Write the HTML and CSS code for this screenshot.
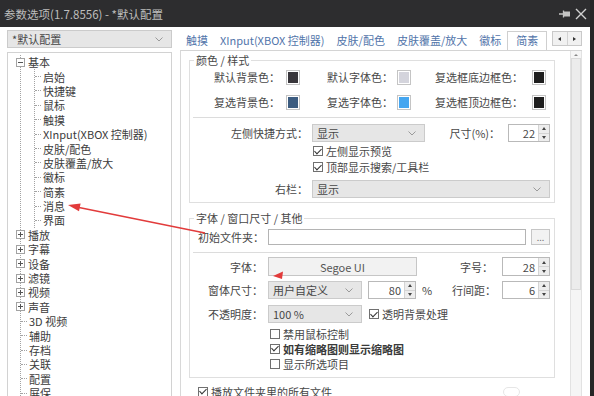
FILE: index.html
```html
<!DOCTYPE html>
<html lang="zh-CN">
<head>
    <meta charset="UTF-8">
    <meta name="viewport" content="width=device-width, initial-scale=1.0">
    <title>参数选项</title>
    <link rel="stylesheet" href="styles.css">
</head>
<body>
<div class="window">
    <div class="titlebar">
        <span class="title">参数选项(1.7.8556) - *默认配置</span>
        <div class="title-btns">
            <svg width="12" height="10" viewBox="0 0 12 10"><path d="M0 5h4M4.5 1.5v7" stroke="#c4c4c4" stroke-width="1.3"/><rect x="5" y="2.5" width="6" height="5" fill="#c4c4c4"/></svg>
            <svg width="12" height="12" viewBox="0 0 12 12"><path d="M1 1l10 10M11 1L1 11" stroke="#d2d2d2" stroke-width="1.4"/></svg>
        </div>
    </div>

    <div class="main">
        <div class="sidebar">
            <div class="select">*默认配置
                <svg width="8" height="5" viewBox="0 0 8 5"><path d="M0.5 0.5L4 4L7.5 0.5" fill="none" stroke="#9a9a9a"/></svg>
            </div>
            <div class="tree">
                <ul class="roots">
                    <li>
                        <div class="row"><svg class="tbox" viewBox="0 0 9 9"><rect x=".5" y=".5" width="8" height="8" fill="#fff" stroke="#a3a3a3"/><path d="M2 4.5h5" stroke="#555"/></svg><span>基本</span></div>
                        <ul class="children">
                            <li class="row leaf">启始</li>
                            <li class="row leaf">快捷键</li>
                            <li class="row leaf">鼠标</li>
                            <li class="row leaf">触摸</li>
                            <li class="row leaf">XInput(XBOX 控制器)</li>
                            <li class="row leaf">皮肤/配色</li>
                            <li class="row leaf">皮肤覆盖/放大</li>
                            <li class="row leaf">徽标</li>
                            <li class="row leaf">简素</li>
                            <li class="row leaf">消息</li>
                            <li class="row leaf">界面</li>
                        </ul>
                    </li>
                    <li class="row"><svg class="tbox" viewBox="0 0 9 9"><rect x=".5" y=".5" width="8" height="8" fill="#fff" stroke="#a3a3a3"/><path d="M2 4.5h5M4.5 2v5" stroke="#555"/></svg><span>播放</span></li>
                    <li class="row"><svg class="tbox" viewBox="0 0 9 9"><rect x=".5" y=".5" width="8" height="8" fill="#fff" stroke="#a3a3a3"/><path d="M2 4.5h5M4.5 2v5" stroke="#555"/></svg><span>字幕</span></li>
                    <li class="row"><svg class="tbox" viewBox="0 0 9 9"><rect x=".5" y=".5" width="8" height="8" fill="#fff" stroke="#a3a3a3"/><path d="M2 4.5h5M4.5 2v5" stroke="#555"/></svg><span>设备</span></li>
                    <li class="row"><svg class="tbox" viewBox="0 0 9 9"><rect x=".5" y=".5" width="8" height="8" fill="#fff" stroke="#a3a3a3"/><path d="M2 4.5h5M4.5 2v5" stroke="#555"/></svg><span>滤镜</span></li>
                    <li class="row"><svg class="tbox" viewBox="0 0 9 9"><rect x=".5" y=".5" width="8" height="8" fill="#fff" stroke="#a3a3a3"/><path d="M2 4.5h5M4.5 2v5" stroke="#555"/></svg><span>视频</span></li>
                    <li class="row"><svg class="tbox" viewBox="0 0 9 9"><rect x=".5" y=".5" width="8" height="8" fill="#fff" stroke="#a3a3a3"/><path d="M2 4.5h5M4.5 2v5" stroke="#555"/></svg><span>声音</span></li>
                    <li class="row leaf">3D 视频</li>
                    <li class="row leaf">辅助</li>
                    <li class="row leaf">存档</li>
                    <li class="row leaf">关联</li>
                    <li class="row leaf">配置</li>
                    <li class="row leaf">屏保</li>
                </ul>
            </div>
        </div>

        <div class="settings">
            <div class="tabbar">
                <div class="tabs">
                    <span class="tab">触摸</span>
                    <span class="tab">XInput(XBOX 控制器)</span>
                    <span class="tab">皮肤/配色</span>
                    <span class="tab">皮肤覆盖/放大</span>
                    <span class="tab">徽标</span>
                    <span class="tab active">简素</span>
                    <span class="tab">消息</span>
                </div>
                <div class="tab-scroll"><span class="left"></span><span class="right"></span></div>
            </div>

            <div class="panel">
                <div class="content">
                    <fieldset class="group">
                        <legend>颜色 / 样式</legend>
                        <div class="colors">
                            <span class="clabel">默认背景色：</span><span class="swatch c-bg"></span>
                            <span class="clabel">默认字体色：</span><span class="swatch c-fg"></span>
                            <span class="clabel">复选框底边框色：</span><span class="swatch c-dark"></span>
                            <span class="clabel">复选背景色：</span><span class="swatch c-selbg"></span>
                            <span class="clabel">复选字体色：</span><span class="swatch c-selfg"></span>
                            <span class="clabel">复选框顶边框色：</span><span class="swatch c-dark"></span>
                        </div>
                        <div class="sep"></div>
                        <div class="frow">
                            <span class="flabel wide">左侧快捷方式：</span>
                            <div class="select w113">显示<svg width="8" height="5" viewBox="0 0 8 5"><path d="M0.5 0.5L4 4L7.5 0.5" fill="none" stroke="#9a9a9a"/></svg></div>
                            <div class="right-pair">
                                <span>尺寸(%)：</span>
                                <div class="spin w42"><span class="val">22</span><span class="arrows"><i class="up"></i><i class="dn"></i></span></div>
                            </div>
                        </div>
                        <div class="cbrow indent-wide first"><span class="cb checked"></span>左侧显示预览</div>
                        <div class="cbrow indent-wide"><span class="cb checked"></span>顶部显示搜索/工具栏</div>
                        <div class="frow gap5">
                            <span class="flabel wide">右栏：</span>
                            <div class="select grow">显示<svg width="8" height="5" viewBox="0 0 8 5"><path d="M0.5 0.5L4 4L7.5 0.5" fill="none" stroke="#9a9a9a"/></svg></div>
                        </div>
                    </fieldset>

                    <fieldset class="group second">
                        <legend>字体 / 窗口尺寸 / 其他</legend>
                        <div class="frow h16 first">
                            <span class="flabel">初始文件夹：</span>
                            <div class="input grow"></div>
                            <div class="btn dots">...</div>
                        </div>
                        <div class="sep sep2"></div>
                        <div class="frow h19">
                            <span class="flabel">字体：</span>
                            <div class="btn font">Segoe UI</div>
                            <div class="right-pair">
                                <span class="rlabel">字号：</span>
                                <div class="spin w48"><span class="val">28</span><span class="arrows"><i class="up"></i><i class="dn"></i></span></div>
                            </div>
                        </div>
                        <div class="frow gap5">
                            <span class="flabel">窗体尺寸：</span>
                            <div class="select w94">用户自定义<svg width="8" height="5" viewBox="0 0 8 5"><path d="M0.5 0.5L4 4L7.5 0.5" fill="none" stroke="#9a9a9a"/></svg></div>
                            <div class="spin w48 ml6"><span class="val">80</span><span class="arrows"><i class="up"></i><i class="dn"></i></span></div>
                            <span class="pct">%</span>
                            <div class="right-pair">
                                <span class="rlabel">行间距：</span>
                                <div class="spin w48"><span class="val">6</span><span class="arrows"><i class="up"></i><i class="dn"></i></span></div>
                            </div>
                        </div>
                        <div class="frow gap6">
                            <span class="flabel">不透明度：</span>
                            <div class="select w94">100 %<svg width="8" height="5" viewBox="0 0 8 5"><path d="M0.5 0.5L4 4L7.5 0.5" fill="none" stroke="#9a9a9a"/></svg></div>
                            <span class="cb checked ml7"></span><span class="cbtext">透明背景处理</span>
                        </div>
                        <div class="cbrow indent first2"><span class="cb"></span>禁用鼠标控制</div>
                        <div class="cbrow indent bold"><span class="cb checked"></span>如有缩略图则显示缩略图</div>
                        <div class="cbrow indent"><span class="cb"></span>显示所选项目</div>
                    </fieldset>

                    <div class="cbrow last"><span class="cb checked"></span>播放文件夹里的所有文件<span class="toggle"></span></div>
                </div>
                <div class="scrollbar">
                    <span class="sb-up"></span>
                    <div class="sb-thumb"></div>
                </div>
            </div>
        </div>
    </div>

    <svg class="annot" width="594" height="396" viewBox="0 0 594 396">
        <path d="M79 207.5L205 233" stroke="#e23b3b" stroke-width="1.5"/>
        <polygon points="68,205 80.6,203.4 79,211.3" fill="#e23b3b"/>
        <polygon points="273,276 283,271.5 282,279" fill="#e23b3b"/>
    </svg>
</div>
</body>
</html>
```

FILE: styles.css
```css
* { box-sizing: border-box; }
body { margin: 0; background: #fff; font-family: "Noto Sans CJK SC", "Liberation Sans", sans-serif; font-size: 11px; color: #474747; }

.window { width: 594px; height: 396px; display: flex; flex-direction: column; border-right: 4px solid #262626; overflow: hidden; position: relative; background: #fff; }
.titlebar { height: 27px; flex: none; background: #2d2d2f; display: flex; align-items: center; justify-content: space-between; padding: 0 3px 0 4px; }
.title { color: #bdbdbd; font-size: 11.5px; }
.title-btns { display: flex; align-items: center; gap: 4px; }

.main { flex: 1; display: flex; padding: 3px 0 0 7px; min-height: 0; }
.sidebar { width: 165px; flex: none; display: flex; flex-direction: column; }

.select { height: 18px; border: 1px solid #cbcbcb; background: #e6e6e6; display: flex; align-items: center; justify-content: space-between; padding: 0 8px 0 4px; line-height: 16px; white-space: nowrap; }
.select.w113 { width: 113px; }
.select.w94 { width: 94px; }
.select.grow { flex: 1; }

/* tree */
.tree { flex: 1; margin-top: 4px; border: 1px solid #d2d2d2; border-bottom: none; padding-top: 2px; overflow: hidden; }
.tree ul { list-style: none; margin: 0; padding: 0; }
.tree .roots { margin-left: 12px; border-left: 1px dotted #a3a3a3; }
.tree .children { margin-left: 13px; border-left: 1px dotted #a3a3a3; }
.row { display: flex; align-items: center; height: 14.4px; line-height: 14px; white-space: nowrap; color: #3c3c3c; }
.tbox { width: 9px; height: 9px; margin-left: -5px; margin-right: 3px; flex: none; }
.leaf::before { content: ""; width: 6px; border-top: 1px dotted #a3a3a3; margin-right: 2px; }

/* tabs */
.settings { flex: 1; margin-left: 8px; display: flex; flex-direction: column; min-width: 0; }
.tabbar { height: 20px; flex: none; display: flex; align-items: flex-end; margin-right: 8px; }
.tabs { flex: 1; display: flex; align-items: flex-end; overflow: hidden; height: 20px; }
.tab { flex: none; padding: 0 6px; height: 18px; line-height: 17px; color: #5275aa; white-space: nowrap; }
.tab.active { background: #fff; border: 1px solid #cfcfcf; border-bottom: none; height: 19px; padding: 0 8px; }
.tab-scroll { width: 30px; height: 15px; margin-bottom: 4px; display: flex; border: 1px solid #c9c9c9; background: #f1f1f1; flex: none; }
.tab-scroll span { flex: 1; display: flex; align-items: center; justify-content: center; }
.tab-scroll span + span { border-left: 1px solid #d2d2d2; }
.tab-scroll .left::before { content: ""; border: 2.5px solid transparent; border-right: 3px solid #333; border-left: 0; }
.tab-scroll .right::before { content: ""; border: 2.5px solid transparent; border-left: 3px solid #333; border-right: 0; }

/* panel */
.panel { flex: 1; display: flex; border-top: 1px solid #d4d4d4; border-left: 1px solid #d8d8d8; margin-right: 8px; min-height: 0; }
.content { flex: 1; padding: 2px 15px 0 8px; min-width: 0; }
.group { margin: 0; border: 1px solid #dfdfdf; padding: 0 4px 4px 8px; min-width: 0; }
.group legend { padding: 0 2px; margin-left: -4px; line-height: 14px; }
.group.second { margin-top: 8px; padding-bottom: 6px; }

.colors { display: grid; grid-template-columns: 88px 14px 97px 14px 121px 14px; grid-auto-rows: 20px; row-gap: 5px; align-items: center; }
.clabel { text-align: right; white-space: nowrap; }
.colors .clabel:nth-child(1), .colors .clabel:nth-child(7) { padding-right: 6px; }
.colors .clabel:nth-child(3), .colors .clabel:nth-child(9) { padding-right: 4px; }
.colors .clabel:nth-child(5), .colors .clabel:nth-child(11) { padding-right: 9px; }
.swatch { width: 14px; height: 15px; border: 1px solid #c4c4c4; box-shadow: inset 0 0 0 1px #fff; }
.c-bg { background: #38363b; }
.c-fg { background: #d4d4dc; }
.c-dark { background: #1f1f1f; }
.c-selbg { background: #3c5c80; }
.c-selfg { background: #45a6f0; }

.sep { border-top: 1px solid #dcdcdc; margin: 5px 0 6px -5px; }
.sep.sep2 { margin: 7px 0 4px -5px; }

.frow { display: flex; align-items: center; height: 18px; white-space: nowrap; }
.frow.h16 { height: 16px; }
.frow.h19 { height: 19px; }
.frow.first { margin-top: 4px; }
.frow.gap5 { margin-top: 5px; }
.frow.gap6 { margin-top: 6px; }
.flabel { width: 70px; flex: none; text-align: right; padding-right: 5px; }
.flabel.wide { width: 114px; padding-right: 4px; }
.right-pair { margin-left: auto; display: flex; align-items: center; height: 100%; }
.right-pair > span { padding-right: 8px; }
.right-pair .rlabel { width: 50px; text-align: right; padding-right: 9px; }
.pct { margin-left: 6px; }
.ml6 { margin-left: 6px; }
.ml7 { margin-left: 7px; }

.spin { display: flex; height: 100%; border: 1px solid #b9b9b9; background: #fff; }
.spin.w42 { width: 42px; }
.spin.w48 { width: 48px; }
.spin .val { flex: 1; text-align: right; padding-right: 3px; display: flex; align-items: center; justify-content: flex-end; }
.spin .arrows { width: 11px; display: flex; flex-direction: column; border-left: 1px solid #d4d4d4; }
.spin .arrows i { flex: 1; background: #ededed; display: flex; align-items: center; justify-content: center; }
.spin .arrows i + i { border-top: 1px solid #d4d4d4; }
.spin .up::before { content: ""; border: 2.5px solid transparent; border-bottom: 3px solid #444; border-top: 0; }
.spin .dn::before { content: ""; border: 2.5px solid transparent; border-top: 3px solid #444; border-bottom: 0; }

.input { height: 100%; border: 1px solid #b4b4b4; background: #fff; }
.input.grow { flex: 1; }
.btn { height: 100%; border: 1px solid #c6c6c6; background: #f2f2f2; display: flex; align-items: center; justify-content: center; color: #555; }
.btn.dots { width: 19px; margin-left: 5px; font-size: 9px; color: #777; }
.btn.font { width: 149px; }

.cbrow { display: flex; align-items: center; height: 16px; gap: 3px; white-space: nowrap; }
.cbrow.indent-wide { padding-left: 115px; }
.cbrow.first { margin-top: 1px; }
.cbrow.indent { padding-left: 72px; height: 15px; }
.cbrow.first2 { margin-top: 3px; }
.cbrow.bold { font-weight: bold; color: #3a3a3a; }
.cbrow.last { margin-top: 6px; padding-left: 9px; height: 15px; }
.cbtext { margin-left: 3px; }
.cb { width: 10px; height: 10px; flex: none; border: 1px solid #707070; background: #fff; display: flex; align-items: center; justify-content: center; }
.cb.checked::after { content: ""; width: 3px; height: 6px; border-right: 1.2px solid #333; border-bottom: 1.2px solid #333; transform: translateY(-1px) rotate(45deg); }
.toggle { margin-left: auto; margin-right: 35px; width: 17px; height: 10px; border: 1px solid #e6e6e6; border-radius: 5px; }

.scrollbar { width: 12px; flex: none; background: #f5f5f5; border-left: 1px solid #e2e2e2; border-right: 1px solid #e2e2e2; display: flex; flex-direction: column; align-items: center; }
.sb-up { height: 7px; display: flex; align-items: center; }
.sb-up::before { content: ""; border: 2px solid transparent; border-bottom: 2.5px solid #888; border-top: 0; }
.sb-thumb { width: 10px; height: 232px; background: #ececec; border: 1px solid #dadada; }

.annot { position: absolute; left: 0; top: 0; pointer-events: none; }
```
